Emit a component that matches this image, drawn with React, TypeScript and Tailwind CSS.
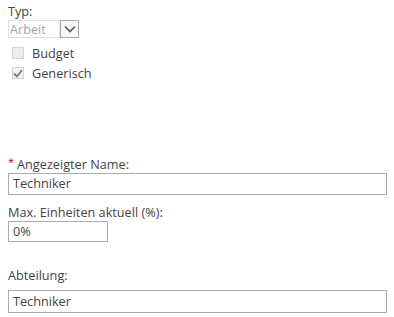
export default function App() {
  return (
    <div
      className="h-[317px] w-[394px] overflow-hidden bg-white text-[12.7px] text-[#444]"
      style={{ fontFamily: '"Open Sans", "Noto Sans", sans-serif' }}
    >
      <div className="px-[8px] pt-[3px]">
        <div className="leading-[16px]">Typ:</div>
        <div className="mt-[1px] flex items-stretch">
          <div className="flex h-[18px] w-[52px] items-center border border-[#e1e1e1] pl-[1px] text-[#a6a6a6] leading-none">
            Arbeit
          </div>
          <div className="flex h-[18px] w-[19px] items-center justify-center border border-[#ababab] bg-[#f6f6f6]">
            <svg width="12" height="8" viewBox="0 0 12 8">
              <path d="M1 1.5 L6 6.5 L11 1.5" fill="none" stroke="#555" strokeWidth="1.6" />
            </svg>
          </div>
        </div>
        <div className="mt-[7px] flex items-center pl-[4px]">
          <span className="h-[12px] w-[12px] border border-[#d4d4d4] bg-[#ececec]" />
          <span className="ml-[8px] leading-[16px]">Budget</span>
        </div>
        <div className="mt-[4px] flex items-center pl-[4px]">
          <span className="flex h-[12px] w-[12px] items-center justify-center border border-[#d4d4d4] bg-[#f2f2f2]">
            <svg width="10" height="9" viewBox="0 0 10 9">
              <path d="M1 4.5 L4 7.5 L9 1" fill="none" stroke="#7a7a7a" strokeWidth="1.8" />
            </svg>
          </span>
          <span className="ml-[8px] leading-[16px]">Generisch</span>
        </div>

        <div className="mt-[75px] flex leading-[16px]">
          <span className="text-[11px] leading-[12px] text-[#bf0000]">*</span>
          <span className="ml-[3px]">Angezeigter Name:</span>
        </div>
        <div className="mt-[1px] flex h-[22px] w-[379px] items-center border border-[#ababab] pl-[4px]">
          Techniker
        </div>
        <div className="mt-[9px] leading-[16px]">Max. Einheiten aktuell (%):</div>
        <div className="mt-[1px] flex h-[21px] w-[100px] items-center border border-[#ababab] pl-[4px]">
          0%
        </div>
        <div className="mt-[25px] leading-[16px]">Abteilung:</div>
        <div className="mt-[7px] flex h-[23px] w-[379px] items-center border border-[#ababab] pl-[4px]">
          Techniker
        </div>
      </div>
    </div>
  );
}
